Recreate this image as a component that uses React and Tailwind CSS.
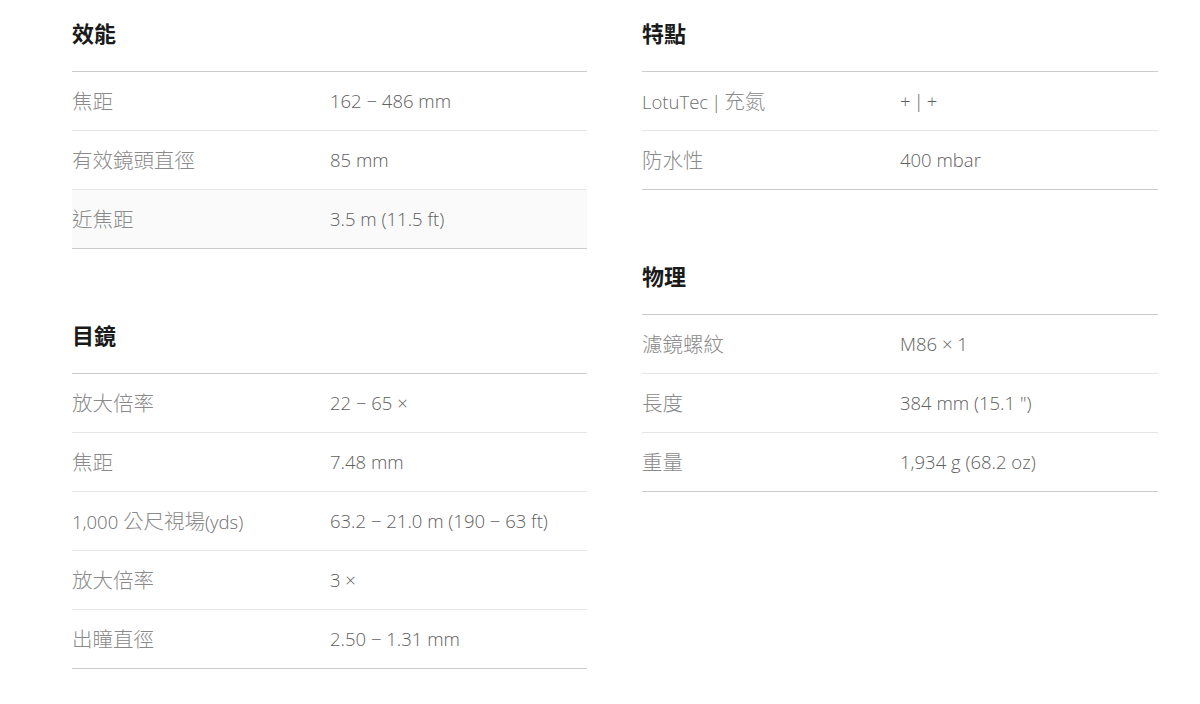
import React from 'react';

const SPECS = {
    left: [
        {
            title: '效能',
            rows: [
                ['焦距', '162 − 486 mm'],
                ['有效鏡頭直徑', '85 mm'],
                ['近焦距', '3.5 m (11.5 ft)', true],
            ],
        },
        {
            title: '目鏡',
            rows: [
                ['放大倍率', '22 − 65 ×'],
                ['焦距', '7.48 mm'],
                ['1,000 公尺視場(yds)', '63.2 − 21.0 m (190 − 63 ft)'],
                ['放大倍率', '3 ×'],
                ['出瞳直徑', '2.50 − 1.31 mm'],
            ],
        },
    ],
    right: [
        {
            title: '特點',
            rows: [
                ['LotuTec\u2009|\u2009充氮', '+\u2009|\u2009+'],
                ['防水性', '400 mbar'],
            ],
        },
        {
            title: '物理',
            rows: [
                ['濾鏡螺紋', 'M86 × 1'],
                ['長度', '384 mm (15.1 ")'],
                ['重量', '1,934 g (68.2 oz)'],
            ],
        },
    ],
};

// CJK glyphs sit a little larger (and lighter) than the latin text in the original
const Mixed = ({ text }) =>
    text.split(/([\u3400-\u9fff]+)/).map((part, i) =>
        /[\u3400-\u9fff]/.test(part)
            ? <span key={i} className="text-[20.5px] text-[#8a8a8a]">{part}</span>
            : <span key={i}>{part}</span>
    );

const SpecSection = ({ title, rows, first }) => (
    <section className={first ? '' : 'mt-[53px]'}>
        <h2 className="h-[71px] pb-1 flex items-center text-[22px] font-semibold text-[#1a1a1a]">{title}</h2>
        <div className="border-t border-[#cccccc]">
            {rows.map(([label, value, shaded], i) => (
                <div
                    key={i}
                    className={`h-[59px] flex items-center text-[18.5px] font-light border-b ${i === rows.length - 1 ? 'border-[#cccccc]' : 'border-[#e6e6e6]'} ${shaded ? 'bg-[#fafafa]' : ''}`}
                >
                    <div className="w-[258px] text-[#6e6e6e]"><Mixed text={label} /></div>
                    <div className="text-[#606060]">{value}</div>
                </div>
            ))}
        </div>
    </section>
);

const App = () => {
    return (
        <div
            className="min-h-[704px] bg-white pl-[72px] flex gap-[55px]"
            style={{ fontFamily: '"Open Sans", "Noto Sans CJK TC", sans-serif' }}
        >
            <div className="w-[515px]">
                {SPECS.left.map((s, i) => (
                    <SpecSection key={s.title} {...s} first={i === 0} />
                ))}
            </div>
            <div className="w-[516px]">
                {SPECS.right.map((s, i) => (
                    <SpecSection key={s.title} {...s} first={i === 0} />
                ))}
            </div>
        </div>
    );
};

export default App;
